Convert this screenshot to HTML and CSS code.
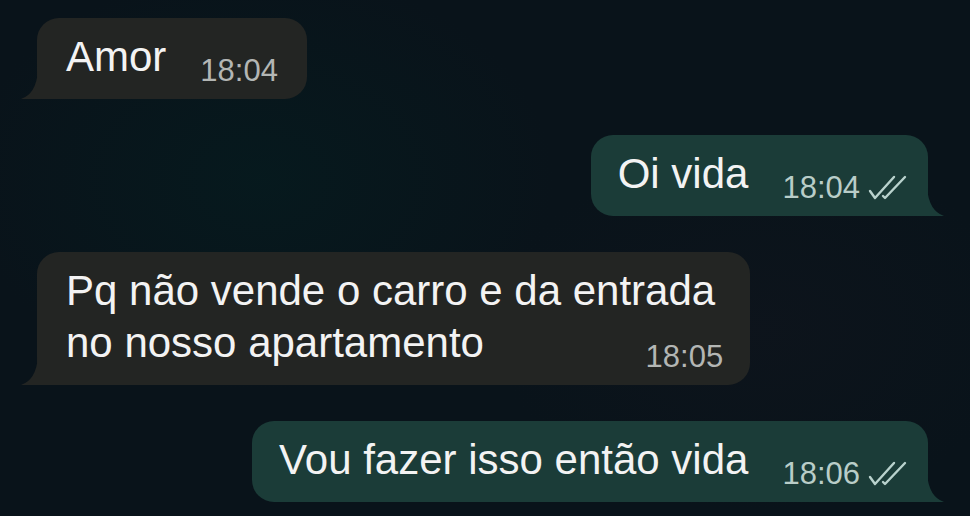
FILE: index.html
```html
<!DOCTYPE html>
<html lang="pt">
<head>
<meta charset="utf-8">
<title>Conversa</title>
<link rel="stylesheet" href="styles.css">
</head>
<body>
<main class="chat">
  <div class="row row-in">
    <div class="bubble bubble-in">
      <svg class="tail tail-in" width="18" height="28" viewBox="0 0 18 28"><path d="M18 0 Q16 23 1 28 L18 28 Z"/></svg>
      <span class="text">Amor</span>
      <span class="meta"><span class="time">18:04</span></span>
    </div>
  </div>

  <div class="row row-out">
    <div class="bubble bubble-out">
      <span class="text">Oi vida</span>
      <span class="meta"><span class="time">18:04</span>
        <svg class="ticks" width="40" height="25" viewBox="0 0 40 25"><path d="M2 16 L7 23 L26 2 M15 21 L17 23 L37 2"/></svg>
      </span>
      <svg class="tail tail-out" width="18" height="28" viewBox="0 0 18 28"><path d="M0 0 Q2 23 17 28 L0 28 Z"/></svg>
    </div>
  </div>

  <div class="row row-in">
    <div class="bubble bubble-in bubble-stack">
      <svg class="tail tail-in" width="18" height="28" viewBox="0 0 18 28"><path d="M18 0 Q16 23 1 28 L18 28 Z"/></svg>
      <span class="text">Pq não vende o carro e da entrada<br>no nosso apartamento</span>
      <span class="meta"><span class="time">18:05</span></span>
    </div>
  </div>

  <div class="row row-out">
    <div class="bubble bubble-out">
      <span class="text">Vou fazer isso então vida</span>
      <span class="meta"><span class="time">18:06</span>
        <svg class="ticks" width="40" height="25" viewBox="0 0 40 25"><path d="M2 16 L7 23 L26 2 M15 21 L17 23 L37 2"/></svg>
      </span>
      <svg class="tail tail-out" width="18" height="28" viewBox="0 0 18 28"><path d="M0 0 Q2 23 17 28 L0 28 Z"/></svg>
    </div>
  </div>
</main>
</body>
</html>
```

FILE: styles.css
```css
html, body {
  margin: 0;
  padding: 0;
}

body {
  width: 970px;
  height: 516px;
  overflow: hidden;
  background: #09131a;
  background-image:
    radial-gradient(ellipse 420px 300px at 260px 180px, rgba(6, 26, 30, 0.9), transparent 70%),
    radial-gradient(ellipse 380px 260px at 760px 330px, rgba(14, 20, 28, 0.8), transparent 70%);
  font-family: "Liberation Sans", Arial, sans-serif;
  color: #f3f3f3;
}

.chat {
  display: flex;
  flex-direction: column;
  gap: 36px;
  padding: 18px 42px 0 37px;
}

.row {
  display: flex;
}

.row-in {
  justify-content: flex-start;
}

.row-out {
  justify-content: flex-end;
}

.bubble {
  position: relative;
  display: flex;
  align-items: flex-end;
  padding: 13px 29px 16px 29px;
  border-radius: 22px;
}

.bubble-in {
  background: #232523;
  border-bottom-left-radius: 0;
}

.bubble-out {
  background: #1b3c38;
  border-bottom-right-radius: 0;
  padding: 13px 20px 16px 27px;
}

.bubble-stack {
  display: grid;
  padding-right: 27px;
}

.bubble-stack .text,
.bubble-stack .meta {
  grid-area: 1 / 1;
}

.bubble-stack .text {
  padding-right: 8px;
}

.bubble-stack .meta {
  justify-self: end;
  align-self: end;
  margin-left: 0;
}

.text {
  font-size: 42px;
  line-height: 52px;
  white-space: nowrap;
}

.meta {
  display: flex;
  align-items: flex-end;
  gap: 8px;
  margin-left: 34px;
  line-height: 24px;
}

.time {
  font-size: 31px;
  line-height: 24px;
  color: #b3b6b4;
}

.bubble-out .time {
  color: #b9cdc8;
}

.ticks {
  display: block;
  fill: none;
  stroke: #b9d2cd;
  stroke-width: 2.4;
  stroke-linecap: round;
  stroke-linejoin: round;
}

.tail {
  position: absolute;
  bottom: 0;
}

.tail-in {
  left: -17px;
  fill: #232523;
}

.tail-out {
  right: -17px;
  fill: #1b3c38;
}
```
